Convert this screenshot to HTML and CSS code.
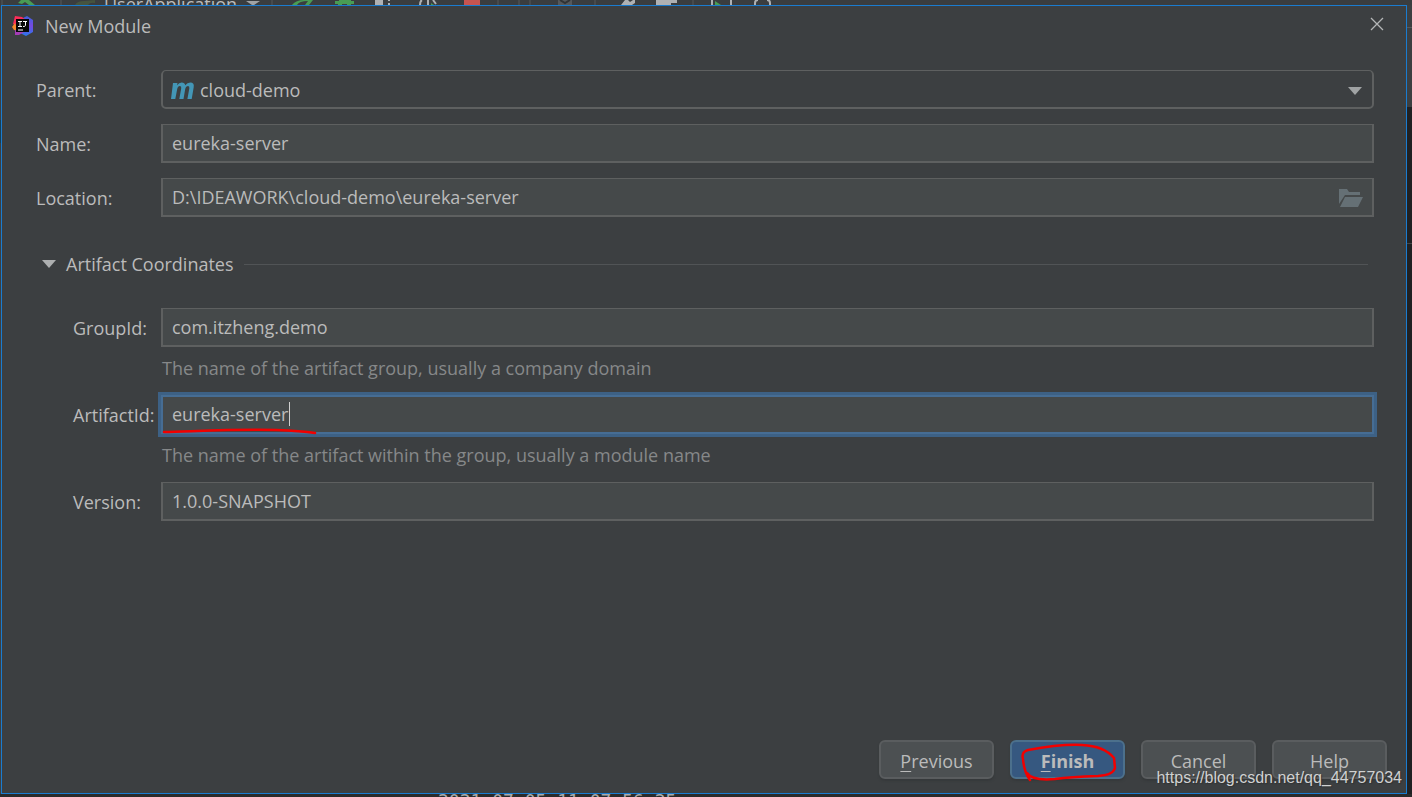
FILE: index.html
```html
<!DOCTYPE html>
<html lang="en">
<head>
<meta charset="utf-8">
<title>New Module</title>
<link rel="stylesheet" href="styles.css">
</head>
<body>
<div class="ide-top">
  <svg class="ide-tools ide-tools-left" width="100" height="5" viewBox="0 0 100 5" aria-hidden="true">
    <path d="M2 0v5M61 0v5" stroke="#55585a"/>
    <path d="M18 3l3-3h8l6 5h-6l-4-3-3 2z" fill="#499c54"/>
    <path d="M75 5q2-4 9-4l11-1v3q-5-1-7 2z" fill="#46543f"/>
  </svg>
  <span class="run-config">UserApplication</span>
  <svg class="ide-tools" width="560" height="5" viewBox="240 0 560 5" aria-hidden="true">
    <path d="M246 1h14l-6 4h-2z" fill="#a0a3a5"/>
    <path d="M272 0v5M498 0v5M519 0v5M530 0v5M595 0v5M693 0v5" stroke="#55585a"/>
    <path d="M292 5q4-5 12-5h9l-4 5h-4l3-4q-9 0-11 4zM335 1h4V0h12v1h3v3h-3v1h-4V4h-5v1h-4V4h-3z" fill="#499c54"/>
    <path d="M375 0h8v5h-8zM388 0h2v1h-2zM388 3h2v2h-2z" fill="#afb1b3"/>
    <path d="M420 5q0-4 2-5M428 0v5M433 0l3 4M712 0v5M731 0v5" fill="none" stroke="#afb1b3" stroke-width="2"/>
    <path d="M464 0h16v5h-16z" fill="#c75450"/>
    <path d="M558 0h14v5h-14z" fill="#55585a"/>
    <path d="m560 0 5 3 5-3" fill="none" stroke="#303335" stroke-width="2"/>
    <path d="M621 5l4-5h3l2 2 3-2h2v3l-3 2zM656 0h21v3h-6v2h-15z" fill="#afb1b3"/>
    <path d="M431 3l3 2h-3zM715 1l6 4h-6z" fill="#499c54"/>
    <path d="M755 5V3q0-3 3-3M770 5V3q0-3-3-3" fill="none" stroke="#afb1b3" stroke-width="2"/>
  </svg>
</div>
<div class="middle">
  <div class="ide-left"></div>
  <main class="dialog">
    <header class="titlebar">
      <svg width="22" height="22" viewBox="0 0 22 22" aria-hidden="true">
        <defs><linearGradient id="blue" x1="0" y1="0" x2="0" y2="1"><stop stop-color="#3d62dd"/><stop offset=".5" stop-color="#7649df"/><stop offset="1" stop-color="#2878ee"/></linearGradient></defs>
        <path d="M11 3l4-2 6 4v12l-7 4-8-4z" fill="url(#blue)"/>
        <path d="M3 1l7 1 5 4-9 6-5-3z" fill="#fc2c58"/>
        <path d="M0 12l3-4 3 8-4-1z" fill="#f68a2b"/>
        <path d="M3 15l9 2-5 3H3z" fill="#a33cb5"/>
        <path d="M4 4h13v13H4z" fill="#080808"/>
        <path d="M6 6.500h4M8 7v5M6 11.500h4M11 6.500h4M13.500 7v3.500q0 1-2.500 1M6 15h5" fill="none" stroke="#fff"/>
      </svg>
      <h1 class="title">New Module</h1>
      <button class="close" type="button" aria-label="Close">
        <svg width="14" height="14" viewBox="0 0 14 14" aria-hidden="true"><path d="M1 1l12 12M13 1L1 13" stroke="#b4b6b7" stroke-width="1.3"/></svg>
      </button>
    </header>
    <form class="form">
      <div class="row">
        <label for="parent">Parent:</label>
        <div class="field">
          <select id="parent" class="control combo"><option>cloud-demo</option></select>
          <svg class="maven" width="25" height="18" viewBox="0 0 25 18" aria-hidden="true"><path d="M3 1h4.500L7 3.200Q9 .6 11.700.6q3 0 3.500 2.600Q17.400.6 20.300.6q4.200 0 3.400 4.600L21.700 17h-4.300l1.900-10.500q.4-2.500-1.200-2.500-2.200 0-2.900 3L13.500 17H9.300l1.900-10.500Q11.600 4 10 4 7.800 4 7.200 7L5.300 17H1z" fill="#4396b6"/></svg>
          <svg class="arrow" width="14" height="8" viewBox="0 0 14 8" aria-hidden="true"><path d="M0 0h14L7 8z" fill="#a0a3a4"/></svg>
        </div>
      </div>
      <div class="row">
        <label for="name">Name:</label>
        <div class="field"><input id="name" class="control" type="text" value="eureka-server"></div>
      </div>
      <div class="row">
        <label for="location">Location:</label>
        <div class="field">
          <input id="location" class="control" type="text" value="D:\IDEAWORK\cloud-demo\eureka-server">
          <button class="browse" type="button" aria-label="Browse">
            <svg width="24" height="18" viewBox="0 0 24 18" aria-hidden="true"><path d="M0 0h8l2 3h11v3H6L0 15zM6 8h18l-5 10H1z" fill="#657075"/></svg>
          </button>
        </div>
      </div>
      <div class="section">
        <svg width="14" height="8" viewBox="0 0 14 8" aria-hidden="true"><path d="M0 0h14L7 8z" fill="#adafb0"/></svg>
        <h2 class="section-title">Artifact Coordinates</h2>
        <span class="rule"></span>
      </div>
      <div class="row sub">
        <label for="group">GroupId:</label>
        <div class="field"><input id="group" class="control" type="text" value="com.itzheng.demo"></div>
      </div>
      <p class="hint">The name of the artifact group, usually a company domain</p>
      <div class="row sub">
        <label for="artifact">ArtifactId:</label>
        <div class="field">
          <input id="artifact" class="control focused" type="text" value="eureka-server">
          <span class="caret"></span>
          <svg class="underline" width="158" height="8" viewBox="0 0 158 8" aria-hidden="true"><path d="M3 5C40 4 80 2 115 3Q140 4 154 6" fill="none" stroke="#f20000" stroke-width="2.500" stroke-linecap="round"/></svg>
        </div>
      </div>
      <p class="hint">The name of the artifact within the group, usually a module name</p>
      <div class="row sub">
        <label for="version">Version:</label>
        <div class="field"><input id="version" class="control" type="text" value="1.0.0-SNAPSHOT"></div>
      </div>
    </form>
    <footer class="actions">
      <button class="btn" type="button"><u>P</u>revious</button>
      <button class="btn primary" type="button"><u>F</u>inish
        <svg class="circle" width="98" height="42" viewBox="0 0 98 42" aria-hidden="true"><path d="M10 39Q4 31 3 18Q1 11 8 9Q40 3 62 4Q84 5 94 17L95 27Q93 34 78 35Q50 36 35 38Q12 40 7 32" fill="none" stroke="#f20000" stroke-width="2.500" stroke-linecap="round" stroke-linejoin="round"/></svg>
      </button>
      <button class="btn" type="button">Cancel</button>
      <button class="btn" type="button">Help</button>
    </footer>
  </main>
  <div class="ide-right"></div>
</div>
<div class="ide-bottom"><span class="log">2021-07-05 11:07:56.25</span></div>
<span class="watermark">https://blog.csdn.net/qq_44757034</span>
</body>
</html>
```
FILE: styles.css
```css
* { box-sizing: border-box; }

body {
  margin: 0;
  min-height: 100vh;
  position: relative;
  display: flex;
  flex-direction: column;
  background: #2b2b2b;
  color: #bbbbbb;
  font: 18px/24px "Open Sans", "Noto Sans", sans-serif;
}

.ide-top {
  display: flex;
  height: 5px;
  overflow: hidden;
  background: #3a3d3f;
}
.ide-tools { flex: none; }
.run-config { width: 140px; flex: none; padding-left: 4px; line-height: 24px; margin-top: -8px; }

.middle { flex: 1; display: flex; }
.ide-left { width: 1px; background: linear-gradient(#3c3f41 115px, #173e54 115px, #173e54 138px, #3c3f41 138px); }
.ide-right { width: 5px; background: linear-gradient(#3c3f41 22px, #55585a 22px, #55585a 23px, #3c3f41 23px, #3c3f41 102px, #202123 102px, #202123 238px, #444749 238px, #444749 239px, #202123 239px); }

.ide-bottom {
  height: 3px;
  overflow: hidden;
  background: #2b2b2b;
  padding-left: 438px;
}
.log { display: block; margin-top: -3px; color: #a9abac; font: 18px/20px "DejaVu Sans Mono", monospace; }

.dialog {
  flex: 1;
  display: flex;
  flex-direction: column;
  border: 1px solid #1a7cd0;
  background: #3c3f41;
}

.titlebar { display: flex; align-items: center; height: 40px; padding: 0 20px 0 10px; }
.title { flex: 1; margin: 0 0 0 11px; font-size: 18px; font-weight: 400; }
.close { display: flex; padding: 2px; border: 0; background: none; margin-bottom: 4px; }

.form { flex: 1; padding: 24px 32px 0 34px; }
.row { display: flex; align-items: center; margin-bottom: 15px; }
.row label { width: 125px; flex: none; }
.sub { margin-bottom: 0; }
.sub label { padding-left: 37px; white-space: nowrap; }

.field { position: relative; flex: 1; display: flex; }
.control {
  width: 100%;
  height: 39px;
  margin: 0;
  padding: 0 9px;
  border: 2px solid #5e6060;
  border-top-width: 1px;
  border-radius: 0;
  outline: 0;
  background: #45494a;
  color: #bbbbbb;
  font: inherit;
}
.combo { appearance: none; padding: 2px 9px 0 37px; border-radius: 5px; background: #3c3f41; }
.focused { border: 2px solid #466d94; padding-bottom: 2px; box-shadow: 0 0 0 3px #3d6185; }

.maven { position: absolute; left: 9px; top: 12px; pointer-events: none; }
.arrow { position: absolute; right: 12px; top: 17px; pointer-events: none; }
.browse { position: absolute; right: 11px; top: 11px; display: flex; padding: 0; border: 0; background: none; }
.caret { position: absolute; left: 128px; top: 7px; width: 1px; height: 24px; background: #d0d0d0; }
.underline { position: absolute; left: 0; top: 32px; }

.section { display: flex; align-items: center; margin: 35px 6px 32px 6px; }
.section-title { margin: 0 10px; font-size: 18px; font-weight: 400; }
.rule { flex: 1; height: 1px; background: #515456; }
.hint { margin: 9px 0 15px 126px; color: #868889; }

.actions { display: flex; justify-content: flex-end; gap: 16px; padding: 0 19px 14px; }
.btn {
  position: relative;
  width: 115px;
  height: 39px;
  padding: 2px 0 0;
  border: 2px solid #5a5d5f;
  border-radius: 6px;
  background: #4c5052;
  box-shadow: 0 2px 2px #36393b;
  color: #bbbbbb;
  font: inherit;
}
.btn u { text-underline-offset: 3px; text-decoration-thickness: 1px; text-decoration-skip-ink: none; }
.primary { border-color: #4c708c; background: #365880; font-weight: 700; }
.circle { position: absolute; left: 8px; top: -1px; }

.watermark {
  position: absolute;
  right: 10px;
  bottom: 9px;
  color: #d0d1d1;
  font: 16px/20px "Liberation Sans", Arial, sans-serif;
  text-shadow: 1px 1px 1px #303233;
}
```
